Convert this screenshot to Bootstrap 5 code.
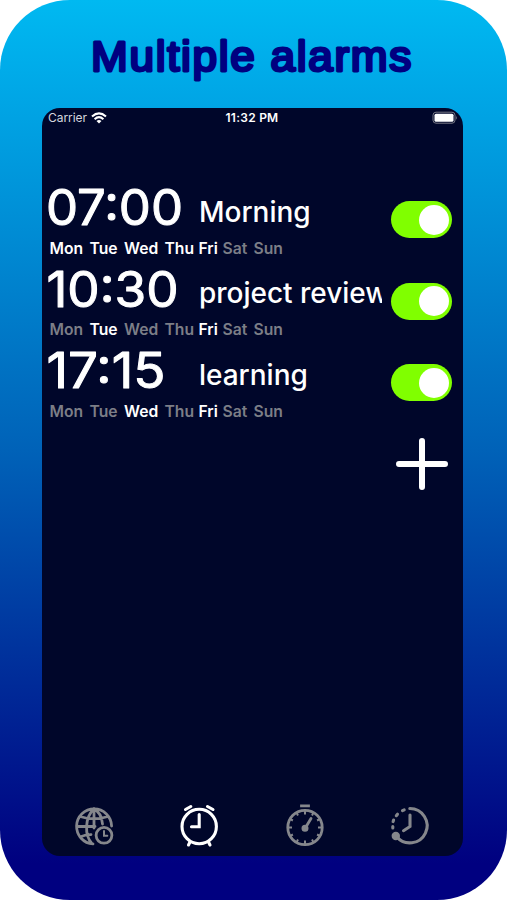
<!DOCTYPE html>
<html lang="en">
<head>
<meta charset="utf-8">
<meta name="viewport" content="width=device-width, initial-scale=1">
<title>Multiple alarms</title>
<link href="https://cdn.jsdelivr.net/npm/bootstrap@5.3.0/dist/css/bootstrap.min.css" rel="stylesheet">
<style>
body{background:#fff;font-family:Inter,"Liberation Sans",sans-serif}
.poster{width:507px;height:900px;border-radius:70px;background:linear-gradient(#00b9f1 0,#00abe9 8%,#0062b8 50%,#000080 96%);padding:0 44px 44px 42px}
.headline{height:108px}
.headline text{font:400 42px "Liberation Sans",Arial,sans-serif;letter-spacing:1.6px;fill:#000080;stroke:#000080;stroke-width:2.8;stroke-linejoin:round}
.screen{height:748px;border-radius:18px;background:#00062a;color:#fff}
.statusbar{height:20px;font-size:12px;line-height:20px;padding:0 5px 0 6px}
.carrier{color:#d4d6df;letter-spacing:-.05px}
.clock{font-weight:600;letter-spacing:.25px;padding-right:2px}
.alarms{padding-top:51px}
.alarm{height:81.6px;padding:0 11px 0 5px}
.top-line{height:59.5px}
.time{width:152px}
.time text{font:400 49px Inter,sans-serif;fill:#fff;stroke:#fff;stroke-width:1;stroke-linejoin:round}
.name{width:182.5px;font-size:28px;line-height:34px;padding-top:15.5px;white-space:nowrap;overflow:hidden;letter-spacing:-.02px;font-weight:500}
.days{display:grid;grid-template-columns:40px 34.5px 40.5px 34px 24px 31px 34px;font-size:15.7px;font-weight:600;line-height:20px;color:#7c7e87;padding-left:2.5px;white-space:nowrap}
.days b{color:#fff;font-weight:600}
.toggle{width:61px;height:37px;padding:3px;background:#80ff00;margin-top:22px}
.toggle span{width:30px;height:30px;background:#fff}
.add-row{padding:14px 15px 0 0}
.tabs{height:57px}
.tabs svg{fill:none;stroke-linecap:round}
</style>
<script src="https://cdn.jsdelivr.net/npm/bootstrap@5.3.0/dist/js/bootstrap.bundle.min.js"></script>
</head>
<body>
<main class="poster overflow-hidden">
  <h1 class="headline m-0"><svg class="d-block" width="421" height="108"><text x="49" y="71" textLength="322" lengthAdjust="spacingAndGlyphs">Multiple alarms</text></svg></h1>
  <section class="screen d-flex flex-column overflow-hidden">
    <div class="statusbar row g-0">
      <div class="col-4 d-flex align-items-center gap-1 carrier"><span>Carrier</span>
        <svg width="16" height="12" viewBox="0 0 16 12" fill="none" stroke="#fff" stroke-width="2.1"><path d="M1 4.5Q8-1.7 15 4.5M3.6 7.2Q8 3.2 12.4 7.2"/><path d="M5.5 9Q8 6.9 10.5 9L8 11.6Z" fill="#fff" stroke="none"/></svg></div>
      <div class="col-4 text-center clock">11:32 PM</div>
      <div class="col-4 d-flex justify-content-end align-items-center"><svg width="26" height="14" viewBox="0 0 26 14"><rect x="1" y="1.2" width="22" height="11" rx="3" fill="none" stroke="#777985"/><rect x="2.5" y="2.7" width="19" height="8" rx="1.5" fill="#fff"/><path d="M24.2 4.8q1.6 2 0 4z" fill="#777985"/></svg></div>
    </div>
    <div class="alarms">
      <div class="alarm d-flex justify-content-between">
        <div><div class="top-line d-flex"><div class="time"><svg class="d-block" width="150" height="58"><text x="-1" y="45.7" textLength="137" lengthAdjust="spacingAndGlyphs">07:00</text></svg></div><div class="name">Morning</div></div>
          <div class="days"><b>Mon</b><b>Tue</b><b>Wed</b><b>Thu</b><b>Fri</b><span>Sat</span><span>Sun</span></div></div>
        <div class="toggle rounded-pill d-flex justify-content-end align-items-center"><span class="rounded-circle"></span></div>
      </div>
      <div class="alarm d-flex justify-content-between">
        <div><div class="top-line d-flex"><div class="time"><svg class="d-block" width="150" height="58"><text x="-.5" y="45.7" textLength="132" lengthAdjust="spacingAndGlyphs">10:30</text></svg></div><div class="name">project review</div></div>
          <div class="days"><span>Mon</span><b>Tue</b><span>Wed</span><span>Thu</span><b>Fri</b><span>Sat</span><span>Sun</span></div></div>
        <div class="toggle rounded-pill d-flex justify-content-end align-items-center"><span class="rounded-circle"></span></div>
      </div>
      <div class="alarm d-flex justify-content-between">
        <div><div class="top-line d-flex"><div class="time"><svg class="d-block" width="150" height="58"><text x="-.5" y="45.7" textLength="119" lengthAdjust="spacingAndGlyphs">17:15</text></svg></div><div class="name">learning</div></div>
          <div class="days"><span>Mon</span><span>Tue</span><b>Wed</b><span>Thu</span><b>Fri</b><span>Sat</span><span>Sun</span></div></div>
        <div class="toggle rounded-pill d-flex justify-content-end align-items-center"><span class="rounded-circle"></span></div>
      </div>
      <div class="add-row d-flex justify-content-end"><svg width="52" height="52" viewBox="0 0 52 52" stroke="#fff" stroke-width="6" stroke-linecap="round"><path d="M3 26H49M26 3V49"/></svg></div>
    </div>
    <nav class="tabs mt-auto row g-0 text-center" aria-label="Sections">
      <div class="col-3"><svg width="50" height="56" viewBox="0 0 50 56" stroke="#85878c" stroke-width="2.8">
        <path d="M41.6 27A17.5 17.5 0 1 0 23 44.9M24 10V29M24 10C15 18 14 36 22 44.6M24 10C30 13 32 18 32.5 25M10 17.5Q24 22 38 17.5M7 27.5H25M10 38Q15 35.5 21 35.6"/><circle cx="34" cy="36.3" r="7.9"/><path d="M34 32V36.7H37.3" stroke-width="2"/></svg></div>
      <div class="col-3"><svg width="50" height="56" viewBox="0 0 50 56" stroke="#fff" stroke-width="3.1">
        <circle cx="24.2" cy="27.5" r="17.2"/><path d="M24.2 15.5V27.7H16.5M10.5 10.5L15.8 7.5M38 10.5L32.5 7.5M15 43L13.5 46M33.5 43L35 46"/></svg></div>
      <div class="col-3"><svg width="50" height="56" viewBox="0 0 50 56" stroke="#85878c" stroke-width="2.8">
        <circle cx="25" cy="28.5" r="17.2"/><path d="M21.5 6.8H28.5" stroke-width="2.8" stroke-linecap="square"/><path d="M25 29.5L31 19.5"/><circle cx="25" cy="29.3" r="2.1" fill="#85878c"/><path stroke-width="2" stroke-linecap="butt" d="M25 11V15.5M25 41.5V46M7.5 28.5H12M38 28.5H42.5M16.3 13.3L18 16.4M33.7 13.3L32 16.4M16.3 43.7L18 40.6M33.7 43.7L32 40.6M9.8 19.8L12.9 21.5M40.2 19.8L37.1 21.5M9.8 37.2L12.9 35.5M40.2 37.2L37.1 35.5"/></svg></div>
      <div class="col-3"><svg width="50" height="56" viewBox="0 0 50 56" stroke="#85878c" stroke-width="3.1">
        <path d="M24.8 9.5A17.2 17.2 0 1 1 11.5 37.5"/><path d="M19.2 10.9L17.5 11.7M12.5 15.2L11.3 16.7M8.6 21L8.1 22.6M7.8 27.5V29M25 16V27.5L18.5 31.7"/><circle cx="10.8" cy="37" r="4.2" fill="#85878c" stroke="none"/></svg></div>
    </nav>
  </section>
</main>
</body>
</html>
